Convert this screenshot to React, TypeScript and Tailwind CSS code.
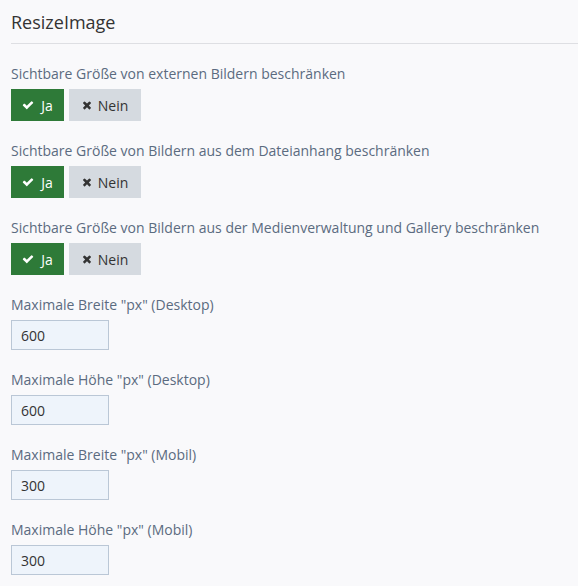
import React from "react";

const font = { fontFamily: '"Open Sans", "Noto Sans", sans-serif' };

function CheckIcon() {
  return (
    <svg viewBox="0 0 1792 1792" className="w-[12px] h-[12px]" fill="currentColor">
      <path d="M1671 566q0 40-28 68l-724 724-136 136q-28 28-68 28t-68-28l-136-136-362-362q-28-28-28-68t28-68l136-136q28-28 68-28t68 28l294 295 656-657q28-28 68-28t68 28l136 136q28 28 28 68z" />
    </svg>
  );
}

function TimesIcon() {
  return (
    <svg viewBox="0 0 1408 1792" className="w-[10px] h-[12px]" fill="currentColor">
      <path d="M1298 1322q0 40-28 68l-136 136q-28 28-68 28t-68-28l-294-294-294 294q-28 28-68 28t-68-28l-136-136q-28-28-28-68t28-68l294-294-294-294q-28-28-28-68t28-68l136-136q28-28 68-28t68 28l294 294 294-294q28-28 68-28t68 28l136 136q28 28 28 68t-28 68l-294 294 294 294q28 28 28 68z" />
    </svg>
  );
}

function Toggle({ label }: { label: string }) {
  return (
    <div className="mb-[19px] last:mb-[20px]">
      <div className="text-[14px] leading-[21px] text-[#5b6b80] mb-[5px]">{label}</div>
      <div className="flex gap-[5px]">
        <button className="h-[32px] w-[53px] bg-[#2e7a38] text-white text-[14px] flex items-center justify-center gap-[7px]">
          <CheckIcon />
          <span>Ja</span>
        </button>
        <button className="h-[32px] w-[72px] bg-[#d5dae0] text-[#333] text-[14px] flex items-center justify-center gap-[6px]">
          <TimesIcon />
          <span>Nein</span>
        </button>
      </div>
    </div>
  );
}

function Field({ label, value }: { label: string; value: string }) {
  return (
    <div className="mb-[20px]">
      <div className="text-[14px] leading-[20px] text-[#5b6b80] mb-[5px]">{label}</div>
      <div className="w-[98px] h-[30px] border border-[#bac7d6] bg-[#eef4fb] text-[14px] text-[#333] flex items-center pl-[9px]">
        {value}
      </div>
    </div>
  );
}

export default function App() {
  return (
    <div className="min-h-[586px] w-[578px] bg-[#f9f9fb]" style={font}>
      <div className="pl-[11px] pt-[9px]">
        <div className="text-[18px] leading-[26px] text-[#333] h-[34px]">ResizeImage</div>
        <div className="h-px bg-[#dedfe3]" />
        <div className="pt-[19px]">
          <div>
            <Toggle label="Sichtbare Größe von externen Bildern beschränken" />
            <Toggle label="Sichtbare Größe von Bildern aus dem Dateianhang beschränken" />
            <Toggle label="Sichtbare Größe von Bildern aus der Medienverwaltung und Gallery beschränken" />
          </div>
          <Field label={'Maximale Breite "px" (Desktop)'} value="600" />
          <Field label={'Maximale Höhe "px" (Desktop)'} value="600" />
          <Field label={'Maximale Breite "px" (Mobil)'} value="300" />
          <Field label={'Maximale Höhe "px" (Mobil)'} value="300" />
        </div>
      </div>
    </div>
  );
}
